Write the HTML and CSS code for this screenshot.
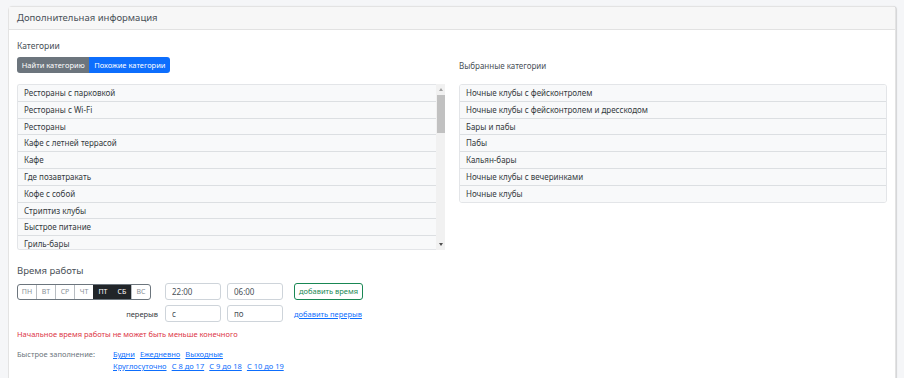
FILE: index.html
```html
<!DOCTYPE html>
<html lang="ru">
<head>
  <meta charset="UTF-8" />
  <meta name="viewport" content="width=device-width, initial-scale=1.0" />
  <title>Дополнительная информация</title>
  <link rel="stylesheet" href="styles.css">
</head>
<body>
  <div class="card">
    <div class="card-header">Дополнительная информация</div>
    <div class="card-body">
      <div class="cats">
        <div class="col">
          <div class="label">Категории</div>
          <div class="btn-group">
            <span class="btn btn-gray">Найти категорию</span>
            <span class="btn btn-blue">Похожие категории</span>
          </div>
          <div class="list-wrap">
            <ul class="list">
              <li>Рестораны с парковкой</li>
              <li>Рестораны с Wi-Fi</li>
              <li>Рестораны</li>
              <li>Кафе с летней террасой</li>
              <li>Кафе</li>
              <li>Где позавтракать</li>
              <li>Кофе с собой</li>
              <li>Стриптиз клубы</li>
              <li>Быстрое питание</li>
              <li>Гриль-бары</li>
            </ul>
            <div class="scrollbar">
              <span class="arrow up"></span>
              <span class="thumb"></span>
              <span class="track"></span>
              <span class="arrow down"></span>
            </div>
          </div>
        </div>
        <div class="col col-right">
          <div class="label">Выбранные категории</div>
          <ul class="list selected">
            <li>Ночные клубы с фейсконтролем</li>
            <li>Ночные клубы с фейсконтролем и дресскодом</li>
            <li>Бары и пабы</li>
            <li>Пабы</li>
            <li>Кальян-бары</li>
            <li>Ночные клубы с вечеринками</li>
            <li>Ночные клубы</li>
          </ul>
        </div>
      </div>

      <div class="hours">
        <div class="hours-title">Время работы</div>
        <div class="hours-grid">
          <div class="days">
            <span class="day">ПН</span>
            <span class="day">ВТ</span>
            <span class="day">СР</span>
            <span class="day">ЧТ</span>
            <span class="day active">ПТ</span>
            <span class="day active">СБ</span>
            <span class="day">ВС</span>
          </div>
          <input class="field" type="text" value="22:00">
          <input class="field" type="text" value="06:00">
          <span class="btn-add">добавить время</span>

          <div class="break-label">перерыв</div>
          <input class="field" type="text" value="с">
          <input class="field" type="text" value="по">
          <a class="link link-break" href="#">добавить перерыв</a>
        </div>
        <div class="error">Начальное время работы не может быть меньше конечного</div>
        <div class="quick">
          <div class="quick-label">Быстрое заполнение:</div>
          <div class="quick-links">
            <div>
              <a class="link" href="#">Будни</a>
              <a class="link" href="#">Ежедневно</a>
              <a class="link" href="#">Выходные</a>
            </div>
            <div>
              <a class="link" href="#">Круглосуточно</a>
              <a class="link" href="#">С 8 до 17</a>
              <a class="link" href="#">С 9 до 18</a>
              <a class="link" href="#">С 10 до 19</a>
            </div>
          </div>
        </div>
      </div>
    </div>
  </div>
</body>
</html>
```

FILE: styles.css
```css
body {
  margin: 0;
  padding: 6px 8px 0 8px;
  background: #f5f6f8;
  font-family: "Noto Sans", "Open Sans", sans-serif;
  color: #343a40;
  font-size: 8px;
}
.card {
  background: #fff;
  border: 1px solid #e3e3e3;
  border-radius: 4px;
  box-shadow: 1px 0 1px rgba(0,0,0,0.14);
  height: 400px;
}
.card-header {
  background: #f7f7f7;
  border-bottom: 1px solid #e2e2e2;
  height: 22px;
  line-height: 22px;
  padding-left: 8px;
  font-size: 9.5px;
  color: #495057;
}
.card-body {
  padding: 10px 8px 0 8px;
}
.cats {
  display: grid;
  grid-template-columns: 428px 428px;
  column-gap: 14px;
}
.label {
  font-size: 8.5px;
  line-height: 12px;
  color: #495057;
}
.col-right {
  padding-top: 20px;
}
.col-right .label {
  font-size: 8px;
  margin-bottom: 12px;
}
.btn-group {
  display: inline-flex;
  margin-top: 5px;
  border-radius: 3px;
  overflow: hidden;
}
.btn {
  height: 16px;
  line-height: 16px;
  padding: 0 4.8px;
  color: #fff;
  font-size: 7.5px;
}
.btn-gray { background: #6c757d; }
.btn-blue { background: #0d6efd; }
.list-wrap {
  display: flex;
  margin-top: 11px;
  height: 166px;
}
.list {
  list-style: none;
  margin: 0;
  padding: 0;
  border: 1px solid #e3e5e8;
  border-radius: 3px;
  overflow: hidden;
}
.list-wrap .list {
  flex: 1;
  border-right: none;
  border-radius: 3px 0 0 3px;
}
.list li {
  height: 15.8px;
  line-height: 15.8px;
  padding-left: 6px;
  background: #f8f9fa;
  border-top: 1px solid #dcdfe2;
  white-space: nowrap;
}
.list li:first-child {
  border-top: none;
}
.scrollbar {
  width: 9px;
  background: #f1f1f1;
  display: flex;
  flex-direction: column;
  align-items: center;
}
.arrow {
  width: 0;
  height: 0;
  border-left: 2.5px solid transparent;
  border-right: 2.5px solid transparent;
  margin: 4px 0;
}
.arrow.up { border-bottom: 3px solid #a3a3a3; }
.arrow.down { border-top: 3px solid #505050; }
.thumb {
  width: 8px;
  height: 38px;
  background: #c1c1c1;
}
.track { flex: 1; }
.hours {
  margin-top: 14px;
}
.hours-title {
  font-size: 9.5px;
  line-height: 14px;
  color: #495057;
}
.hours-grid {
  display: grid;
  grid-template-columns: 142px 56px 56px auto;
  column-gap: 6px;
  row-gap: 5px;
  margin-top: 5px;
  align-items: center;
}
.days {
  display: flex;
  width: 134px;
  height: 16px;
  border: 1px solid #6c757d;
  border-radius: 3px;
  overflow: hidden;
  box-sizing: border-box;
}
.day {
  flex: 1;
  text-align: center;
  line-height: 14px;
  font-size: 7px;
  color: #8a9198;
  border-left: 1px solid #b8bdc2;
}
.day:first-child { border-left: none; }
.day.active {
  background: #212529;
  color: #fff;
  border-left-color: #212529;
}
.field {
  box-sizing: border-box;
  width: 56px;
  height: 17px;
  border: 1px solid #ced4da;
  border-radius: 3px;
  padding: 0 6px;
  font-family: inherit;
  font-size: 8px;
  color: #495057;
}
.btn-add {
  justify-self: start;
  margin-left: 5px;
  border: 1px solid #198754;
  border-radius: 3px;
  color: #198754;
  height: 15px;
  line-height: 15px;
  padding: 0 4px;
  font-size: 7.5px;
}
.break-label {
  text-align: right;
  padding-right: 1px;
  font-size: 7.5px;
  color: #343a40;
}
.link {
  color: #0d6efd;
  text-decoration: underline;
  font-size: 7.5px;
}
.link-break {
  margin-left: 5px;
}
.error {
  margin-top: 7px;
  color: #dc3545;
  font-size: 7.5px;
  line-height: 11px;
}
.quick {
  display: flex;
  margin-top: 8px;
  line-height: 12px;
}
.quick-label {
  width: 96px;
  color: #6c757d;
  font-size: 7.5px;
}
.quick-links .link {
  margin-right: 3px;
}
```
